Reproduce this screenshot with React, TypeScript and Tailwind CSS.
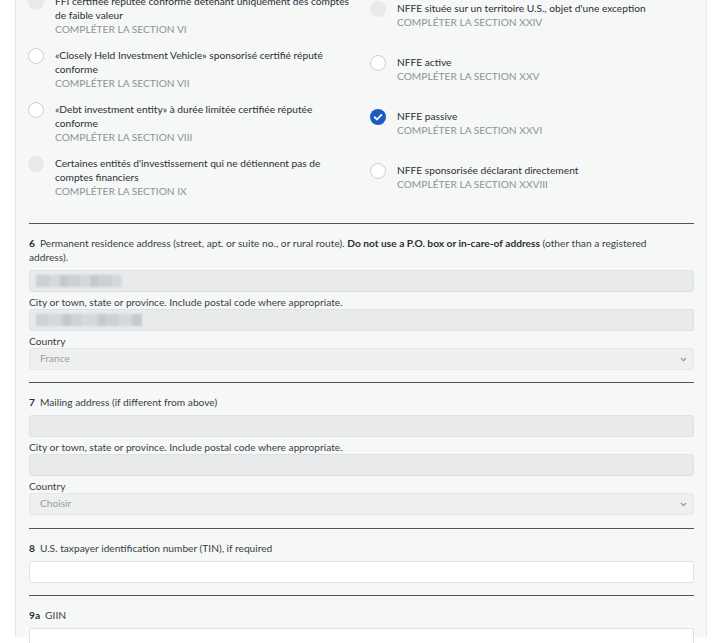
import React from "react";

type RadioState = "empty" | "disabled" | "checked";

type Option = {
  label: string;
  section: string;
  state: RadioState;
};

const rows: [Option, Option][] = [
  [
    {
      label: "FFI certifiée réputée conforme détenant uniquement des comptes de faible valeur",
      section: "VI",
      state: "disabled",
    },
    {
      label: "NFFE située sur un territoire U.S., objet d'une exception",
      section: "XXIV",
      state: "disabled",
    },
  ],
  [
    {
      label: "«Closely Held Investment Vehicle» sponsorisé certifié réputé conforme",
      section: "VII",
      state: "empty",
    },
    { label: "NFFE active", section: "XXV", state: "empty" },
  ],
  [
    {
      label: "«Debt investment entity» à durée limitée certifiée réputée conforme",
      section: "VIII",
      state: "empty",
    },
    { label: "NFFE passive", section: "XXVI", state: "checked" },
  ],
  [
    {
      label: "Certaines entités d'investissement qui ne détiennent pas de comptes financiers",
      section: "IX",
      state: "disabled",
    },
    {
      label: "NFFE sponsorisée déclarant directement",
      section: "XXVIII",
      state: "empty",
    },
  ],
];

const Radio = ({ state }: { state: RadioState }) => {
  if (state === "checked") {
    return (
      <svg width="16" height="16" viewBox="0 0 16 16" className="shrink-0">
        <circle cx="8" cy="8" r="8" fill="#1d5bc4" />
        <path d="M4.6 8.2 L7 10.5 L11.4 5.9" fill="none" stroke="#fff" strokeWidth="1.8" strokeLinecap="round" strokeLinejoin="round" />
      </svg>
    );
  }
  if (state === "disabled") {
    return <div className="w-4 h-4 shrink-0 rounded-full bg-[#e9eaea]" />;
  }
  return <div className="w-4 h-4 shrink-0 rounded-full bg-white border border-[#cdcfd0]" />;
};

const RadioOption = ({ option }: { option: Option }) => (
  <div className="flex items-start gap-[11px] pl-[8px] pr-[8px]">
    <Radio state={option.state} />
    <div className="text-[10.2px] leading-[14px]">
      <div className="text-[#2b2f33]">{option.label}</div>
      <div className="text-[#8a949a]">COMPLÉTER LA SECTION {option.section}</div>
    </div>
  </div>
);

const Rule = () => <div className="h-px bg-[#545454]" />;

const SectionLabel = ({ num, children }: { num: string; children: React.ReactNode }) => (
  <div className="text-[10.2px] leading-[14px] text-[#3a3f44]">
    <span className="font-bold text-[#2b2f33] mr-[5px]">{num}</span>
    {children}
  </div>
);

const SubLabel = ({ children }: { children: React.ReactNode }) => (
  <div className="mt-[3px] text-[10.2px] leading-[14px] text-[#3a3f44]">{children}</div>
);

const DisabledInput = ({ blur, top }: { blur?: number[]; top?: boolean }) => (
  <div
    className={
      (top ? "mt-[6px] " : "") +
      "h-[22px] rounded-[3px] border border-[#dee1e3] bg-[#e8eaec] flex items-center pl-[6px] overflow-hidden"
    }
  >
    {blur && (
      <div className="flex items-center blur-[1px]">
        {blur.map((w, i) => (
          <div
            key={i}
            className={
              i % 3 === 0
                ? "h-[12px] bg-[#cdd0d4]"
                : i % 3 === 1
                ? "h-[12px] bg-[#d6d9dc]"
                : "h-[12px] bg-[#c5c8cc]"
            }
            style={{ width: w }}
          />
        ))}
      </div>
    )}
  </div>
);

const TextInput = () => (
  <div className="mt-[6px] h-[22px] rounded-[3px] border border-[#dfe2e3] bg-white" />
);

const DisabledSelect = ({ value }: { value: string }) => (
  <div className="h-[22px] rounded-[3px] border border-[#e6e8e8] bg-[#eeefef] flex items-center justify-between pl-[10px] pr-[6px]">
    <span className="text-[10.2px] text-[#9a9fa3]">{value}</span>
    <svg width="7" height="5" viewBox="0 0 7 5">
      <path d="M1 1 L3.5 3.6 L6 1" fill="none" stroke="#8f9396" strokeWidth="1.1" />
    </svg>
  </div>
);

export default function App() {
  return (
    <div className="w-[724px] h-[643px] overflow-hidden bg-white font-['Lato','Open_Sans',sans-serif]">
      <div className="ml-[15px] w-[692px] h-full bg-[#f6f7f7] border-x border-[#e7e9e9] pl-[13px] pr-[12px]">
        <div className="-mt-[6px] -ml-[9px] grid grid-cols-[342px_1fr] gap-y-[12px] items-center">
          {rows.map(([l, r], i) => (
            <React.Fragment key={i}>
              <RadioOption option={l} />
              <RadioOption option={r} />
            </React.Fragment>
          ))}
        </div>

        <div className="mt-[25px]">
          <Rule />
          <div className="pt-[12px] pb-[12px]">
            <SectionLabel num="6">
              Permanent residence address (street, apt. or suite no., or rural route).{" "}
              <span className="font-bold text-[#2b2f33]">Do not use a P.O. box or in-care-of address</span>{" "}
              (other than a registered
              <br />
              address).
            </SectionLabel>
            <DisabledInput top blur={[14, 10, 8, 12, 10, 8, 14, 10]} />
            <SubLabel>City or town, state or province. Include postal code where appropriate.</SubLabel>
            <DisabledInput blur={[12, 14, 8, 12, 16, 8, 12, 14, 10]} />
            <SubLabel>Country</SubLabel>
            <DisabledSelect value="France" />
          </div>

          <Rule />
          <div className="pt-[12px] pb-[13px]">
            <SectionLabel num="7">Mailing address (if different from above)</SectionLabel>
            <DisabledInput top />
            <SubLabel>City or town, state or province. Include postal code where appropriate.</SubLabel>
            <DisabledInput />
            <SubLabel>Country</SubLabel>
            <DisabledSelect value="Choisir" />
          </div>

          <Rule />
          <div className="pt-[12px] pb-[12px]">
            <SectionLabel num="8">U.S. taxpayer identification number (TIN), if required</SectionLabel>
            <TextInput />
          </div>

          <Rule />
          <div className="pt-[12px] pb-[12px]">
            <SectionLabel num="9a">GIIN</SectionLabel>
            <TextInput />
          </div>
        </div>
      </div>
    </div>
  );
}
